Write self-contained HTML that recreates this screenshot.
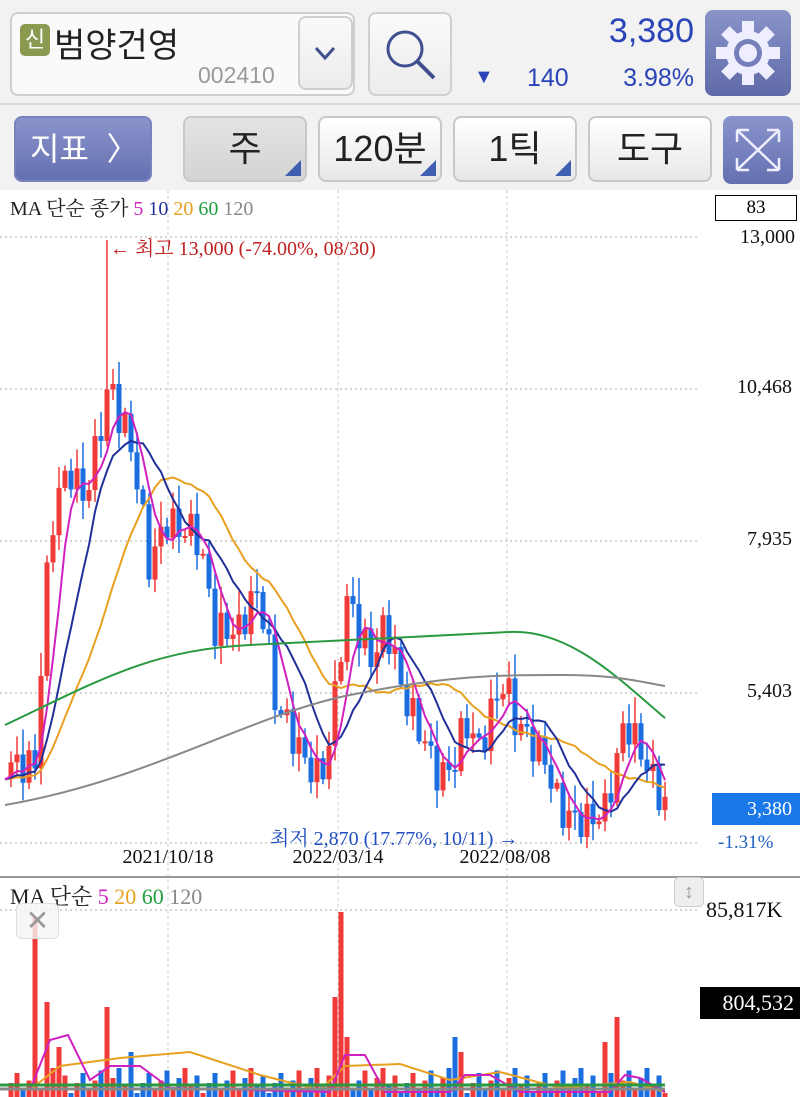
<!DOCTYPE html>
<html><head><meta charset="utf-8"><style>
*{margin:0;padding:0;box-sizing:border-box}
body{width:800px;height:1097px;overflow:hidden;background:#fff;font-family:"Liberation Sans","Noto Sans CJK KR",sans-serif;position:relative}
.hdr{position:absolute;left:0;top:0;width:800px;height:105px;background:#f2f2f2;border-bottom:2px solid #d8d8d8}
.tb{position:absolute;left:0;top:105px;width:800px;height:85px;background:#f2f2f2}
.box{position:absolute;border:2px solid #cfcfcf;border-radius:8px;background:linear-gradient(#fafafa,#ececec)}
.btn{position:absolute;top:116px;height:66px;border:2px solid #c8c8c8;border-radius:8px;background:linear-gradient(#fff,#e8e8e8);font-size:36px;color:#222;text-align:center;line-height:62px}
.tri{position:absolute;right:4px;bottom:4px;width:0;height:0;border-left:16px solid transparent;border-bottom:16px solid #3f5fb0}
.ser{font-family:"Liberation Serif","Noto Serif CJK SC",serif}
</style></head><body>
<div class="hdr"></div>
<div class="box" style="left:10px;top:12px;width:345px;height:84px;background:#fafafa"></div>
<div style="position:absolute;left:20px;top:24px;width:30px;height:32px;background:#8a9a50;border-radius:5px;color:#fff;font-size:22px;text-align:center;line-height:32px">신</div>
<div style="position:absolute;left:54px;top:18px;font-size:34px;color:#222">범양건영</div>
<div style="position:absolute;left:198px;top:62px;font-size:23px;color:#999">002410</div>
<div class="box" style="left:298px;top:16px;width:55px;height:74px"><svg width="51" height="70"><path d="M16 30 L25 40 L34 30" stroke="#3f4f90" stroke-width="3" fill="none"/></svg></div>
<div class="box" style="left:368px;top:12px;width:84px;height:84px"><svg width="80" height="80"><circle cx="35" cy="35" r="17" stroke="#3f4f90" stroke-width="3" fill="none"/><path d="M47 47 L64 64" stroke="#3f4f90" stroke-width="4"/></svg></div>
<div style="position:absolute;right:106px;top:12px;font-size:34px;color:#2a44b8">3,380</div>
<div style="position:absolute;left:474px;top:66px;font-size:20px;color:#2a44b8">▼</div>
<div style="position:absolute;left:527px;top:64px;font-size:25px;color:#2a44b8">140</div>
<div style="position:absolute;right:106px;top:64px;font-size:25px;color:#2a44b8">3.98%</div>
<div style="position:absolute;left:705px;top:10px;width:86px;height:86px;border-radius:8px;background:linear-gradient(#8a94c8,#5f6aa8)"><svg width="86" height="86"><g transform="translate(43,43)" fill="#eef"><circle r="22"/><g id="t"><rect x="-6" y="-32" width="12" height="14"/></g><use href="#t" transform="rotate(45)"/><use href="#t" transform="rotate(90)"/><use href="#t" transform="rotate(135)"/><use href="#t" transform="rotate(180)"/><use href="#t" transform="rotate(225)"/><use href="#t" transform="rotate(270)"/><use href="#t" transform="rotate(315)"/><circle r="14" fill="#7580bb"/><circle r="9" fill="#eef"/></g></svg></div>
<div class="tb"></div>
<div class="btn" style="left:14px;width:138px;background:linear-gradient(#8a94cc,#6470b0);border-color:#7a84bc;color:#fff;font-size:32px;text-align:left;padding-left:14px">지표 &nbsp;〉</div>
<div class="btn" style="left:183px;width:124px;background:linear-gradient(#e4e4e4,#d4d4d4)">주<div class="tri"></div></div>
<div class="btn" style="left:318px;width:124px">120분<div class="tri"></div></div>
<div class="btn" style="left:453px;width:124px">1틱<div class="tri"></div></div>
<div class="btn" style="left:588px;width:124px">도구</div>
<div style="position:absolute;left:723px;top:116px;width:70px;height:68px;border-radius:8px;background:linear-gradient(#8a94cc,#6470b0)"><svg width="70" height="68"><g stroke="#eef" stroke-width="2.5" fill="none"><path d="M14 14 L56 54 M56 14 L14 54 M14 14h12M14 14v12M56 14h-12M56 14v12M14 54h12M14 54v-12M56 54h-12M56 54v-12"/></g></svg></div>
<svg id="c" width="800" height="907" style="position:absolute;left:0;top:190px" font-family="Liberation Serif, Noto Serif CJK KR, serif"></svg>
<div style="position:absolute;left:0;top:876px;width:800px;height:2px;background:#999"></div>
<div class="ser" style="position:absolute;left:10px;top:192px;font-size:20px;color:#222">MA 단순 종가 <span style="color:#d020c0">5</span> <span style="color:#22309a">10</span> <span style="color:#e8a020">20</span> <span style="color:#20a040">60</span> <span style="color:#888">120</span></div>
<div class="ser" style="position:absolute;left:715px;top:195px;width:82px;height:26px;border:1.5px solid #000;font-size:19px;text-align:center;line-height:23px">83</div>
<div class="ser" style="position:absolute;left:110px;top:232px;font-size:20px;color:#c02020">← 최고 13,000 (-74.00%, 08/30)</div>
<div class="ser" style="position:absolute;left:270px;top:822px;font-size:20px;color:#2050c0">최저 2,870 (17.77%, 10/11) →</div>
<div class="ser" style="position:absolute;left:712px;top:793px;width:88px;height:32px;background:#1a78e8;color:#fff;font-size:20px;text-align:right;padding-right:8px;line-height:32px">3,380</div>
<div class="ser" style="position:absolute;left:718px;top:832px;font-size:19px;color:#2060c0">-1.31%</div>
<div class="ser" style="position:absolute;left:10px;top:880px;font-size:22px;color:#222">MA 단순 <span style="color:#d020c0">5</span> <span style="color:#e8a020">20</span> <span style="color:#20a040">60</span> <span style="color:#888">120</span></div>
<div style="position:absolute;left:16px;top:903px;width:43px;height:36px;border:1px solid #ddd;border-radius:6px;background:rgba(245,245,245,.8);color:#999;font-size:28px;text-align:center;line-height:34px">✕</div>
<div style="position:absolute;left:674px;top:877px;width:30px;height:30px;border:1px solid #ccc;border-radius:5px;background:#eee;color:#999;font-size:20px;text-align:center;line-height:28px">↕</div>
<div class="ser" style="position:absolute;left:706px;top:897px;font-size:22px;color:#111">85,817K</div>
<div class="ser" style="position:absolute;left:700px;top:987px;width:100px;height:32px;background:#000;color:#fff;font-size:22px;text-align:right;padding-right:6px;line-height:32px">804,532</div>
<script>
(function(){
var s=document.getElementById('c'),o=190,h='';
function L(x1,y1,x2,y2,c,w,d){h+='<line x1="'+x1+'" y1="'+(y1-o)+'" x2="'+x2+'" y2="'+(y2-o)+'" stroke="'+c+'" stroke-width="'+w+'"'+(d?' stroke-dasharray="'+d+'"':'')+'/>';}
function T(x,y,t,sz,a){h+='<text x="'+x+'" y="'+(y-o)+'" font-size="'+sz+'" text-anchor="'+(a||'start')+'" fill="#111">'+t+'</text>';}
[237,389,541,693,843].forEach(function(y){L(0,y,700,y,'#bbb',1.2,'2 3');});
[168,338,507].forEach(function(x){L(x,190,x,876,'#ccc',1,'3 3');L(x,880,x,1097,'#ccc',1,'3 3');});
L(0,910,700,910,'#bbb',1.2,'2 3');
T(795,243,'13,000',20,'end');T(792,393,'10,468',20,'end');T(792,545,'7,935',20,'end');T(792,697,'5,403',20,'end');
T(168,863,'2021/10/18',20,'middle');T(338,863,'2022/03/14',20,'middle');T(505,863,'2022/08/08',20,'middle');
var k=[[5,765],[35,765],[45,600],[55,500],[70,470],[85,500],[100,430],[110,380],[120,420],[130,440],[140,500],[150,570],[165,520],[180,530],[195,530],[205,570],[215,630],[240,630],[255,590],[265,620],[275,700],[290,730],[305,760],[320,780],[330,740],[340,650],[350,590],[360,640],[375,660],[385,620],[395,660],[405,700],[420,730],[440,780],[455,760],[465,720],[480,750],[495,700],[505,680],[515,720],[530,740],[545,760],[560,810],[575,820],[590,820],[605,810],[615,770],[625,720],[635,740],[645,760],[655,785],[665,805]];
var ys=[],xs=[];
for(var x=5;x<=665;x+=6){var i=0;while(i<k.length-2&&k[i+1][0]<x)i++;var a=k[i],b=k[i+1],t=(x-a[0])/(b[0]-a[0]);t=Math.max(0,Math.min(1,t));var y=a[1]+(b[1]-a[1])*t+Math.sin(x*1.7)*18;xs.push(x);ys.push(y);}
var big={5:180,7:95,17:90,9:50,21:45,55:100,56:185,57:60,75:60,76:45,100:55,102:80};
for(var i=1;i<ys.length;i++){var up=ys[i]<ys[i-1],c=up?'#f03a3a':'#1a6ee0',t=Math.min(ys[i],ys[i-1]),bt=Math.max(ys[i],ys[i-1]);if(bt-t<2)bt=t+2;var w=(i*7)%23+4;var tp=t-w;if(i==17)tp=240;L(xs[i],tp,xs[i],bt+w*0.7,c,1.5);h+='<rect x="'+(xs[i]-2.5)+'" y="'+(t-o)+'" width="5" height="'+(bt-t)+'" fill="'+c+'"/>';
var v=((i*37)%11)*2.5+4;var vc=c;if(big[i]){v=big[i];if(v>150)vc='#f03a3a';}h+='<rect x="'+(xs[i]-2.5)+'" y="'+(1097-v-o)+'" width="5" height="'+v+'" fill="'+vc+'"/>';}
function ma(n,c){var p='';for(var i=0;i<ys.length;i++){var sm=0;for(var j=0;j<n;j++)sm+=ys[Math.max(0,i-j)];p+=(i?'L':'M')+xs[i]+' '+(sm/n-o)+' ';}h+='<path d="'+p+'" stroke="'+c+'" stroke-width="2" fill="none"/>';}
ma(20,'#e8a020');ma(10,'#22309a');ma(5,'#d020c0');
h+='<path d="M5 '+(725-o)+' C100 '+(680-o)+' 150 '+(650-o)+' 250 '+(645-o)+' S450 '+(635-o)+' 510 '+(632-o)+' S620 '+(680-o)+' 665 '+(718-o)+'" stroke="#2a9a40" stroke-width="2" fill="none"/>';
h+='<path d="M5 '+(805-o)+' C150 '+(780-o)+' 250 '+(715-o)+' 350 '+(695-o)+' S500 '+(675-o)+' 560 '+(675-o)+' S640 '+(682-o)+' 665 '+(686-o)+'" stroke="#888" stroke-width="2" fill="none"/>';
h+='<path d="M30 '+(1090-o)+' L60 '+(1066-o)+' L120 '+(1058-o)+' L190 '+(1052-o)+' L260 '+(1075-o)+' L320 '+(1090-o)+' L345 '+(1066-o)+' L400 '+(1064-o)+' L450 '+(1080-o)+' L500 '+(1072-o)+' L560 '+(1088-o)+' L630 '+(1082-o)+' L665 '+(1092-o)+'" stroke="#e8a020" stroke-width="2" fill="none"/>';
h+='<path d="M30 '+(1090-o)+' L50 '+(1040-o)+' L68 '+(1035-o)+' L90 '+(1080-o)+' L110 '+(1066-o)+' L140 '+(1066-o)+' L170 '+(1088-o)+' L330 '+(1092-o)+' L345 '+(1055-o)+' L365 '+(1055-o)+' L385 '+(1092-o)+' L450 '+(1092-o)+' L465 '+(1075-o)+' L490 '+(1075-o)+' L520 '+(1092-o)+' L610 '+(1092-o)+' L625 '+(1075-o)+' L640 '+(1078-o)+' L665 '+(1092-o)+'" stroke="#d020c0" stroke-width="2" fill="none"/>';
L(0,1085,665,1085,'#2a9a40',3);L(0,1089,665,1089,'#888',3);
s.innerHTML=h;
})();
</script>
</body></html>
